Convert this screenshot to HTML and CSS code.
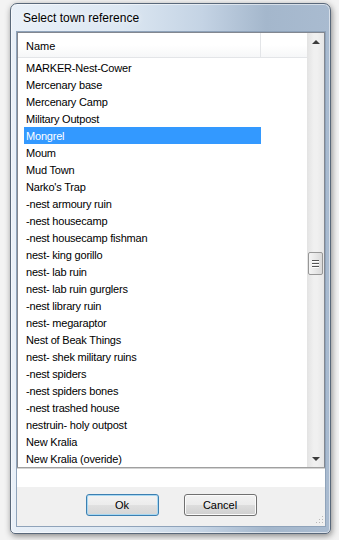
FILE: index.html
```html
<!DOCTYPE html>
<html lang="en">
<head>
  <meta charset="UTF-8" />
  <title>Select town reference</title>
  <link rel="stylesheet" href="styles.css">
</head>
<body>

  <div class="window">
    <div class="titlebar">Select town reference</div>

    <div class="client">
      <!-- list of towns -->
      <div class="listview">
        <div class="list-main">
          <div class="header">
            <div class="col-name">Name</div>
            <div class="col-rest"></div>
          </div>
          <ul class="rows">
            <li>MARKER-Nest-Cower</li>
            <li>Mercenary base</li>
            <li>Mercenary Camp</li>
            <li>Military Outpost</li>
            <li class="selected">Mongrel</li>
            <li>Moum</li>
            <li>Mud Town</li>
            <li>Narko's Trap</li>
            <li>-nest armoury ruin</li>
            <li>-nest housecamp</li>
            <li>-nest housecamp fishman</li>
            <li>nest- king gorillo</li>
            <li>nest- lab ruin</li>
            <li>nest- lab ruin gurglers</li>
            <li>-nest library ruin</li>
            <li>nest- megaraptor</li>
            <li>Nest of Beak Things</li>
            <li>nest- shek military ruins</li>
            <li>-nest spiders</li>
            <li>-nest spiders bones</li>
            <li>-nest trashed house</li>
            <li>nestruin- holy outpost</li>
            <li>New Kralia</li>
            <li>New Kralia (overide)</li>
          </ul>
        </div>

        <div class="scrollbar">
          <div class="sb-btn"><span class="tri up"></span></div>
          <div class="sb-track">
            <div class="sb-thumb">
              <span></span><span></span><span></span>
            </div>
          </div>
          <div class="sb-btn"><span class="tri down"></span></div>
        </div>
      </div>

      <div class="textbox"></div>

      <div class="buttons">
        <button class="btn default">Ok</button>
        <button class="btn">Cancel</button>
      </div>

      <!-- resize grip -->
      <svg class="grip" width="9" height="9" viewBox="0 0 9 9">
        <rect x="7" y="1" width="1" height="1" fill="#b8b8b8"/>
        <rect x="4" y="4" width="1" height="1" fill="#b8b8b8"/>
        <rect x="7" y="4" width="1" height="1" fill="#b8b8b8"/>
        <rect x="1" y="7" width="1" height="1" fill="#b8b8b8"/>
        <rect x="4" y="7" width="1" height="1" fill="#b8b8b8"/>
        <rect x="7" y="7" width="1" height="1" fill="#b8b8b8"/>
      </svg>
    </div>
  </div>

</body>
</html>
```

FILE: styles.css
```css
body {
  margin: 0;
  width: 339px;
  height: 540px;
  overflow: hidden;
  background: #f3f3f3;
  font-family: 'Liberation Sans', Arial, sans-serif;
}

.window {
  box-sizing: border-box;
  margin: 3px 0 0 10px;
  width: 321px;
  height: 531px;
  padding: 0 4px 6px 5px;
  border: 1px solid #59687a;
  border-radius: 7px 7px 5px 5px;
  background: linear-gradient(90deg, #e9f0f8 0%, #dce7f2 35%, #c4d3e4 60%, #a4b7cc 80%, #a9bbd0 100%);
  box-shadow: inset 0 0 0 1px rgba(255, 255, 255, 0.55), 1px 2px 6px rgba(0, 0, 0, 0.45);
  display: flex;
  flex-direction: column;
}

.titlebar {
  height: 27px;
  padding-left: 7px;
  font-size: 12px;
  line-height: 29px;
  color: #000;
  text-shadow: 0 0 6px #fff;
}

.client {
  position: relative;
  flex: 1;
  display: flex;
  flex-direction: column;
  border: 1px solid #8fa3ba;
  background: #f0f0f0;
}

.listview {
  display: flex;
  height: 436px;
  box-sizing: border-box;
  border: 1px solid #828790;
  border-bottom-color: #a0a0a0;
  background: #fff;
  overflow: hidden;
}

.list-main {
  flex: 1;
  min-width: 0;
}

.header {
  display: flex;
  height: 25px;
  box-sizing: border-box;
  border-bottom: 1px solid #e3e5e8;
  background: linear-gradient(#ffffff, #ffffff 50%, #f6f7f8);
  font-size: 11px;
}

.col-name {
  width: 243px;
  box-sizing: border-box;
  padding-left: 8px;
  padding-top: 1px;
  line-height: 24px;
  border-right: 1px solid #e3e5e8;
}

.col-rest {
  flex: 1;
}

.rows {
  list-style: none;
  margin: 0;
  padding: 1px 0 0 0;
}

.rows li {
  width: 237px;
  height: 17px;
  margin-left: 6px;
  padding-left: 2px;
  padding-top: 2px;
  box-sizing: border-box;
  font-size: 11px;
  line-height: 15px;
  letter-spacing: -0.2px;
  white-space: nowrap;
  color: #000;
}

.rows li.selected {
  background: #3399ff;
  color: #fff;
}

.scrollbar {
  width: 17px;
  display: flex;
  flex-direction: column;
  background: linear-gradient(90deg, #e3e3e3, #f0f0f0 40%, #f0f0f0 60%, #e6e6e6);
}

.sb-btn {
  height: 17px;
  display: flex;
  align-items: center;
  justify-content: center;
}

.tri {
  width: 0;
  height: 0;
  border-left: 4px solid transparent;
  border-right: 4px solid transparent;
}

.tri.up { border-bottom: 4px solid #3c3c3c; }
.tri.down { border-top: 4px solid #3c3c3c; }

.sb-track {
  flex: 1;
  padding-top: 202px;
}

.sb-thumb {
  width: 15px;
  height: 23px;
  margin-left: 1px;
  box-sizing: border-box;
  border: 1px solid #979797;
  border-radius: 2px;
  background: linear-gradient(90deg, #f4f4f4, #e8e8e8 50%, #d9d9d9);
  display: flex;
  flex-direction: column;
  align-items: center;
  justify-content: center;
  gap: 2px;
}

.sb-thumb span {
  display: block;
  width: 7px;
  height: 1px;
  background: #555;
  box-shadow: 0 1px 0 #fff;
}

.textbox {
  height: 18px;
  background: #fff;
  border-top: 1px solid #d4d4d4;
}

.buttons {
  display: flex;
  justify-content: center;
  gap: 25px;
  padding-top: 7px;
}

.btn {
  width: 73px;
  height: 22px;
  padding: 0;
  font-family: 'Liberation Sans', Arial, sans-serif;
  font-size: 11px;
  color: #000;
  border: 1px solid #707070;
  border-radius: 3px;
  background: linear-gradient(#f2f2f2, #ebebeb 50%, #dddddd 51%, #cfcfcf);
  box-shadow: inset 0 0 0 1px #fbfbfb;
}

.btn.default {
  border-color: #3c7fb1;
  box-shadow: inset 0 0 0 1px #a8d8f2;
  background: linear-gradient(#f3f3f3, #ececec 50%, #e0e0e0 51%, #d6d6d6);
}

.grip {
  position: absolute;
  right: 1px;
  bottom: 2px;
}
```
